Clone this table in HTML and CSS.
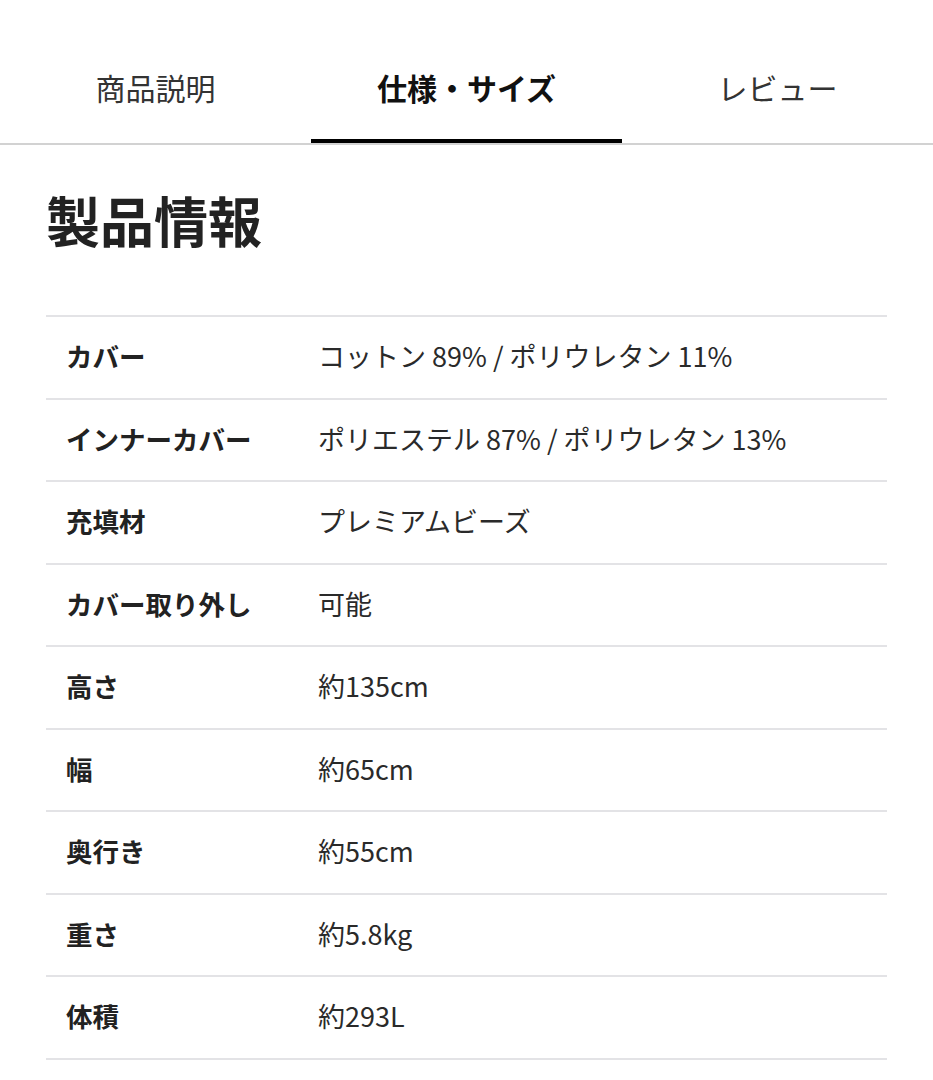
FILE: index.html
```html
<!DOCTYPE html>
<html lang="ja">
<head>
<meta charset="utf-8">
<title>製品情報</title>
<link rel="stylesheet" href="styles.css">
</head>
<body>
<nav class="tabs">
  <div class="tab">商品説明</div>
  <div class="tab active">仕様・サイズ</div>
  <div class="tab">レビュー</div>
</nav>
<main class="content">
  <h1 class="title">製品情報</h1>
  <div class="spec">
    <div class="row"><div class="label">カバー</div><div class="value">コットン 89% / ポリウレタン 11%</div></div>
    <div class="row"><div class="label">インナーカバー</div><div class="value">ポリエステル 87% / ポリウレタン 13%</div></div>
    <div class="row"><div class="label">充填材</div><div class="value">プレミアムビーズ</div></div>
    <div class="row"><div class="label">カバー取り外し</div><div class="value">可能</div></div>
    <div class="row"><div class="label">高さ</div><div class="value">約135cm</div></div>
    <div class="row"><div class="label">幅</div><div class="value">約65cm</div></div>
    <div class="row"><div class="label">奥行き</div><div class="value">約55cm</div></div>
    <div class="row"><div class="label">重さ</div><div class="value">約5.8kg</div></div>
    <div class="row"><div class="label">体積</div><div class="value">約293L</div></div>
  </div>
</main>
</body>
</html>
```
FILE: styles.css
```css
html, body {
  margin: 0;
  padding: 0;
  background: #ffffff;
}
body {
  font-family: "Noto Sans CJK JP", "Noto Sans", sans-serif;
  color: #222222;
}
.tabs {
  display: grid;
  grid-template-columns: 1fr 1fr 1fr;
  border-bottom: 2px solid #d2d2d2;
}
.tab {
  text-align: center;
  font-size: 30px;
  line-height: 45px;
  padding-top: 65px;
  padding-bottom: 29px;
  color: #333333;
  border-bottom: 4px solid transparent;
}
.tab.active {
  font-weight: 700;
  color: #111111;
  border-bottom-color: #000000;
}
.content {
  padding: 0 46px;
}
.title {
  margin: 42px 0 63px;
  font-size: 54px;
  line-height: 65px;
  font-weight: 700;
  color: #222222;
}
.spec {
  border-bottom: 2px solid #e3e3e6;
}
.row {
  display: grid;
  grid-template-columns: 272px 1fr;
  align-items: center;
  height: 80.5px;
  border-top: 2px solid #e3e3e6;
}
.label {
  padding-left: 20px;
  font-size: 26.5px;
  line-height: 36px;
  padding-bottom: 2px;
  font-weight: 700;
  color: #222222;
}
.value {
  font-size: 27px;
  line-height: 36px;
  padding-bottom: 2px;
  color: #2a2a2a;
}
```
